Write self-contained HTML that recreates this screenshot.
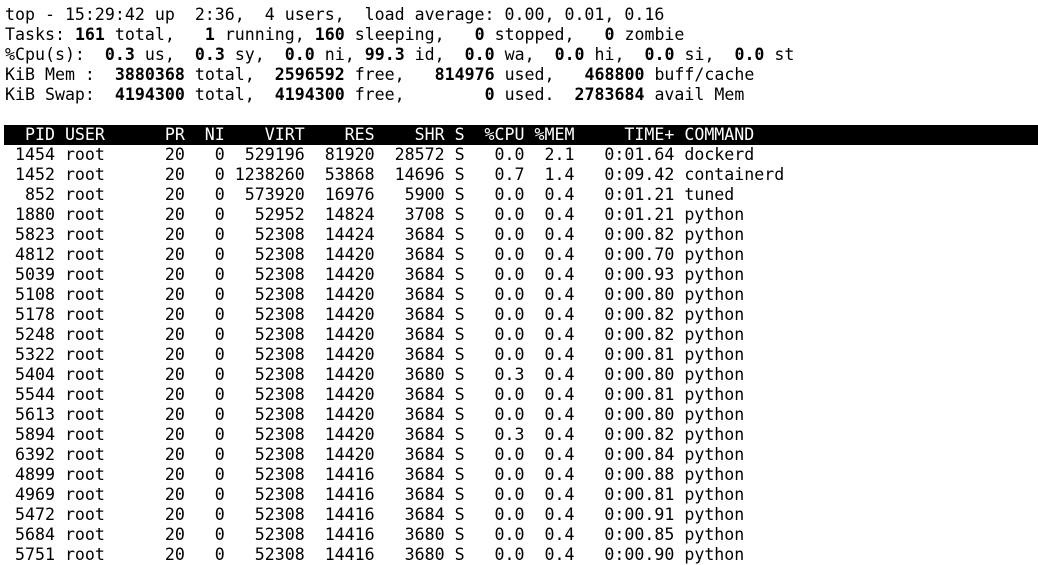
<!DOCTYPE html>
<html><head><meta charset="utf-8"><style>
html,body{margin:0;padding:0;background:#fff;width:1038px;height:555px;overflow:hidden}
pre{margin:0;position:absolute;left:5px;top:5px;font-family:"DejaVu Sans Mono","Liberation Mono",monospace;font-size:16.6px;line-height:20px;color:#000}
b{font-weight:bold}
.bar{display:block;background:#000;color:#fff;margin-left:-1px;padding-left:1px;width:1034px}
</style></head><body>
<pre>top - 15:29:42 up  2:36,  4 users,  load average: 0.00, 0.01, 0.16
Tasks: <b>161</b> total,   <b>1</b> running, <b>160</b> sleeping,   <b>0</b> stopped,   <b>0</b> zombie
%Cpu(s):  <b>0.3</b> us,  <b>0.3</b> sy,  <b>0.0</b> ni, <b>99.3</b> id,  <b>0.0</b> wa,  <b>0.0</b> hi,  <b>0.0</b> si,  <b>0.0</b> st
KiB Mem :  <b>3880368</b> total,  <b>2596592</b> free,   <b>814976</b> used,   <b>468800</b> buff/cache
KiB Swap:  <b>4194300</b> total,  <b>4194300</b> free,        <b>0</b> used.  <b>2783684</b> avail Mem

<span class="bar">  PID USER      PR  NI    VIRT    RES    SHR S  %CPU %MEM     TIME+ COMMAND</span> 1454 root      20   0  529196  81920  28572 S   0.0  2.1   0:01.64 dockerd
 1452 root      20   0 1238260  53868  14696 S   0.7  1.4   0:09.42 containerd
  852 root      20   0  573920  16976   5900 S   0.0  0.4   0:01.21 tuned
 1880 root      20   0   52952  14824   3708 S   0.0  0.4   0:01.21 python
 5823 root      20   0   52308  14424   3684 S   0.0  0.4   0:00.82 python
 4812 root      20   0   52308  14420   3684 S   0.0  0.4   0:00.70 python
 5039 root      20   0   52308  14420   3684 S   0.0  0.4   0:00.93 python
 5108 root      20   0   52308  14420   3684 S   0.0  0.4   0:00.80 python
 5178 root      20   0   52308  14420   3684 S   0.0  0.4   0:00.82 python
 5248 root      20   0   52308  14420   3684 S   0.0  0.4   0:00.82 python
 5322 root      20   0   52308  14420   3684 S   0.0  0.4   0:00.81 python
 5404 root      20   0   52308  14420   3680 S   0.3  0.4   0:00.80 python
 5544 root      20   0   52308  14420   3684 S   0.0  0.4   0:00.81 python
 5613 root      20   0   52308  14420   3684 S   0.0  0.4   0:00.80 python
 5894 root      20   0   52308  14420   3684 S   0.3  0.4   0:00.82 python
 6392 root      20   0   52308  14420   3684 S   0.0  0.4   0:00.84 python
 4899 root      20   0   52308  14416   3684 S   0.0  0.4   0:00.88 python
 4969 root      20   0   52308  14416   3684 S   0.0  0.4   0:00.81 python
 5472 root      20   0   52308  14416   3684 S   0.0  0.4   0:00.91 python
 5684 root      20   0   52308  14416   3680 S   0.0  0.4   0:00.85 python
 5751 root      20   0   52308  14416   3680 S   0.0  0.4   0:00.90 python
</pre>
</body></html>
